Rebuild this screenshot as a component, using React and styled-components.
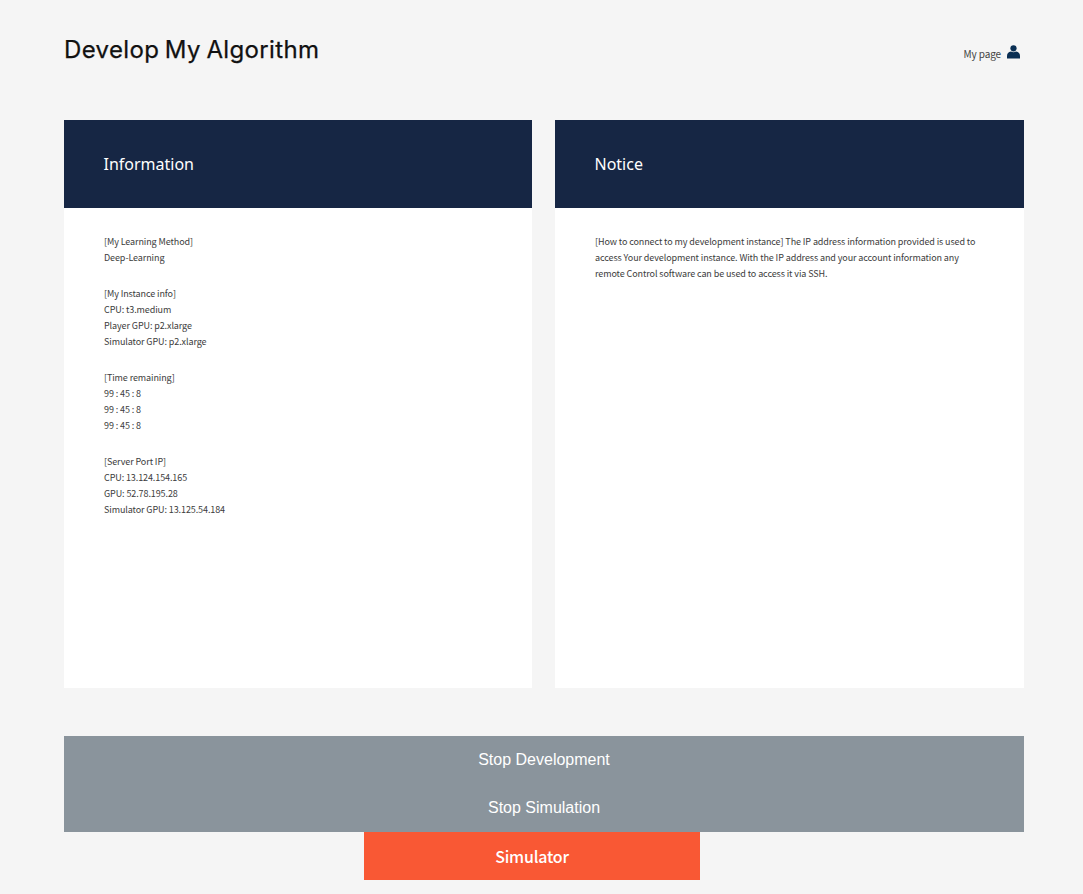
import React from 'react';
import styled, { createGlobalStyle } from 'styled-components';

const Global = createGlobalStyle`
  * { box-sizing: border-box; }
  body { margin: 0; background: #f5f5f5; font-family: "Noto Sans", "Noto Sans CJK KR", sans-serif; color: #555; }
`;
const Page = styled.main`width: 960px; height: 894px; margin-left: 64px; display: flex; flex-direction: column;`;
const Header = styled.header`height: 120px; padding-top: 31px; display: flex; justify-content: space-between; align-items: flex-start;`;
const Title = styled.h1`margin: 0; padding-top: 1px; font: 400 24px/36px Inter, "Noto Sans CJK KR", sans-serif; letter-spacing: 0.35px; word-spacing: -1.5px; -webkit-text-stroke: 0.25px #111; color: #111; white-space: nowrap;`;
const MyPage = styled.a`display: flex; gap: 6px; margin: 14px 4px 0 0; font: 400 10px/18px "Noto Sans CJK KR", sans-serif; color: #444; letter-spacing: -0.1px;`;
const Columns = styled.section`display: grid; grid-template-columns: 468px 469px; gap: 23px; height: 568px;`;
const Panel = styled.article`background: #fff;`;
const PanelHead = styled.h2`margin: 0; height: 88px; padding-left: 39.5px; background: #162644; color: #fff; font: 400 16px/88px "Noto Sans", sans-serif;`;
const PanelBody = styled.div`padding: 26px 40px; display: flex; flex-direction: column; gap: 20px;`;
const Group = styled.p`margin: 0; font: 400 9px/16px "Noto Sans CJK KR", sans-serif; color: #3c3c3c; letter-spacing: -0.097px; white-space: pre-line;`;
const Actions = styled.div`margin-top: 48px; display: flex; flex-direction: column;`;
const StopButton = styled.button`height: 48px; border: 0; padding: 0; background: #8a949c; color: #fff; font: 16px "Liberation Sans", sans-serif;`;
const SimButton = styled.button`width: 336px; height: 48px; margin-left: 300px; border: 0; padding: 0; background: #f95834; color: #fff; font: 500 16px "Noto Sans CJK KR", sans-serif; letter-spacing: -0.2px;`;

const info = [
  '[My Learning Method]\nDeep-Learning',
  '[My Instance info]\nCPU: t3.medium\nPlayer GPU: p2.xlarge\nSimulator GPU: p2.xlarge',
  '[Time remaining]\n99 : 45 : 8\n99 : 45 : 8\n99 : 45 : 8',
  '[Server Port IP]\nCPU: 13.124.154.165\nGPU: 52.78.195.28\nSimulator GPU: 13.125.54.184',
];
const notice = '[How to connect to my development instance] The IP address information provided is used to\naccess Your development instance. With the IP address and your account information any\nremote Control software can be used to access it via SSH.';

export default function App() {
  return (
    <>
      <Global />
      <Page>
        <Header>
          <Title>Develop My Algorithm</Title>
          <MyPage>
            My page
            <svg width="13" height="14" viewBox="0 0 13 14" fill="#0a2f54">
              <circle cx="6.5" cy="3.3" r="3.1" />
              <path d="M0 13.6V11Q0 7.4 4 6.6Q6.5 7.8 9 6.6Q13 7.4 13 11V13.6Z" />
            </svg>
          </MyPage>
        </Header>
        <Columns>
          <Panel>
            <PanelHead>Information</PanelHead>
            <PanelBody>{info.map((t) => <Group key={t}>{t}</Group>)}</PanelBody>
          </Panel>
          <Panel>
            <PanelHead>Notice</PanelHead>
            <PanelBody><Group>{notice}</Group></PanelBody>
          </Panel>
        </Columns>
        <Actions>
          <StopButton>Stop Development</StopButton>
          <StopButton>Stop Simulation</StopButton>
          <SimButton>Simulator</SimButton>
        </Actions>
      </Page>
    </>
  );
}
